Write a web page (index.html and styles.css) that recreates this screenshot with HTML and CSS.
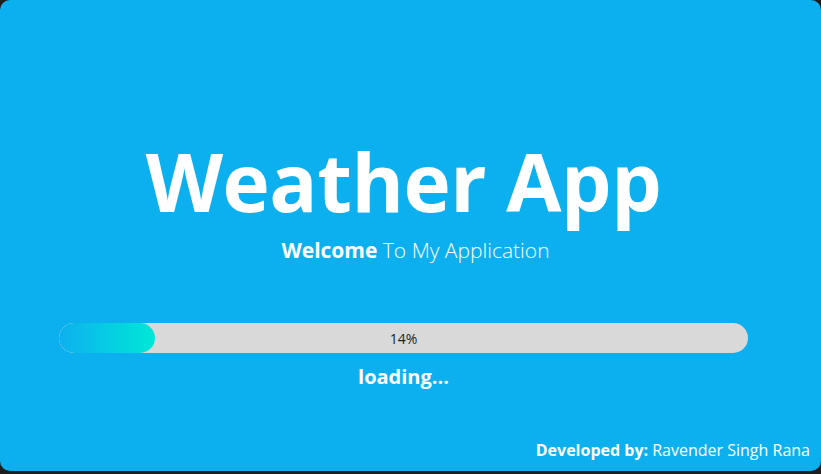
FILE: index.html
```html
<!DOCTYPE html>
<html lang="en">
<head>
<meta charset="utf-8">
<title>Weather App</title>
<link rel="stylesheet" href="styles.css">
</head>
<body>
<main class="window">
  <section class="content">
    <h1 class="title">Weather App</h1>
    <p class="subtitle"><strong>Welcome</strong> To My Application</p>
    <div class="progress">
      <div class="progress-fill" style="width: 14%"></div>
      <span class="progress-label">14%</span>
    </div>
    <p class="loading">loading...</p>
  </section>
  <footer class="credit"><strong>Developed by:</strong> Ravender Singh Rana</footer>
</main>
</body>
</html>
```
FILE: styles.css
```css
html, body {
  margin: 0;
  padding: 0;
  background: #1e1e1e;
  width: 821px;
  height: 474px;
  overflow: hidden;
}

.window {
  box-sizing: border-box;
  width: 821px;
  height: 471px;
  background: #0db0ef;
  border-radius: 10px;
  display: flex;
  flex-direction: column;
  padding: 141px 11px 13px 0;
  font-family: "Open Sans", "Noto Sans", sans-serif;
  color: #fff;
}

.content {
  width: 689px;
  margin-left: 59px;
  display: flex;
  flex-direction: column;
  align-items: center;
}

.title {
  margin: 0;
  font-size: 80px;
  line-height: 80px;
  font-weight: 700;
  letter-spacing: -0.5px;
}

.subtitle {
  margin: 19px 0 0 24px;
  font-size: 21px;
  line-height: 21px;
  font-weight: 300;
}

.subtitle strong {
  font-weight: 700;
}

.progress {
  position: relative;
  align-self: stretch;
  margin-top: 62px;
  height: 30px;
  border-radius: 15px;
  background: #d9d9d9;
  overflow: hidden;
  display: flex;
  align-items: center;
  justify-content: center;
}

.progress-fill {
  position: absolute;
  left: 0;
  top: 0;
  bottom: 0;
  border-radius: 15px;
  background: linear-gradient(to right, #0db0ef, #00e8d6);
}

.progress-label {
  position: relative;
  font-size: 14px;
  color: #222;
}

.loading {
  margin: 14px 0 0;
  font-size: 20px;
  line-height: 20px;
  font-weight: 700;
}

.credit {
  margin-top: auto;
  align-self: flex-end;
  font-size: 16px;
  line-height: 16px;
  font-weight: 400;
}

.credit strong {
  font-weight: 700;
}
```
